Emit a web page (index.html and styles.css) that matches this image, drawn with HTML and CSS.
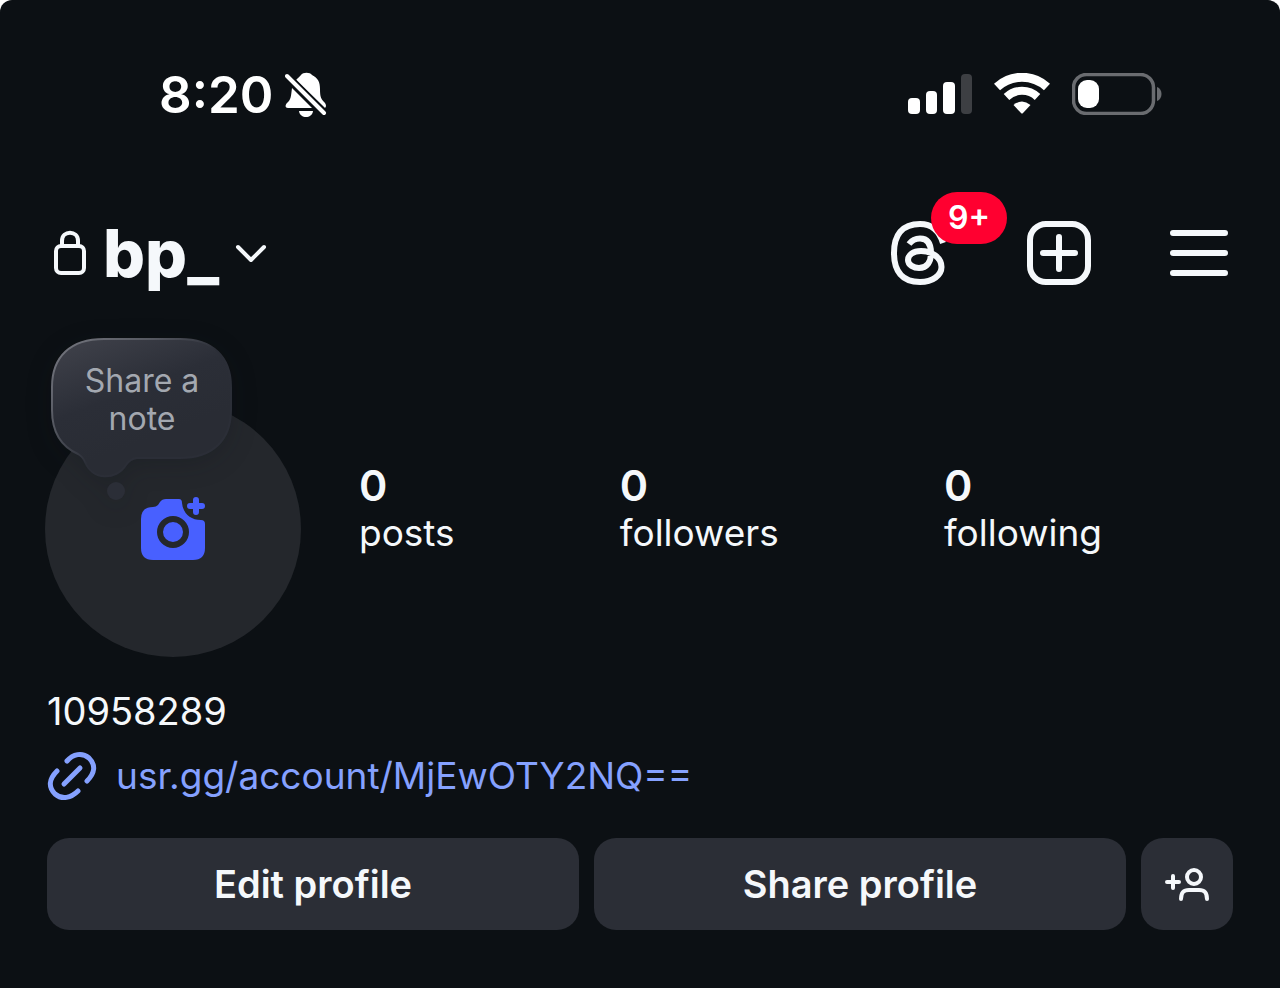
FILE: index.html
```
<!DOCTYPE html>
<html lang="en">
<head>
    <meta charset="UTF-8">
    <meta name="viewport" content="width=device-width, initial-scale=1.0">
    <title>Profile</title>
    <link rel="stylesheet" href="styles.css">
</head>
<body>
    <div class="screen">
        <div class="status-bar">
            <div class="status-left">
                <span class="time">8:20</span>
                <svg class="bell" width="42" height="46" viewBox="0 0 42 46" fill="#fff">
                    <path d="M7 16 L27 36 H3 C0 36 0 33 2 31 C6 28 6 24 7 16 Z"/>
                    <path d="M11 8 C13 6 15 4 16 3 C18 0 25 0 27 3 C33 6 35 10 35 17 C35 25 36 27 40 31 Q42 34 40 36 Z"/>
                    <path d="M14 39 H28 C27 47 15 47 14 39 Z"/>
                    <path d="M2 4 L39 41" stroke="#0c1014" stroke-width="8"/>
                    <path d="M2 4 L39 41" stroke="#fff" stroke-width="4" stroke-linecap="round"/>
                </svg>
            </div>
            <div class="status-right">
                <svg width="64" height="42" viewBox="0 0 64 42" fill="#fff">
                    <rect x="0" y="25" width="12" height="16" rx="4"/>
                    <rect x="18" y="18" width="11" height="23" rx="4"/>
                    <rect x="35" y="9" width="12" height="32" rx="4"/>
                    <rect x="53" y="1" width="11" height="40" rx="4" fill="#3d3f43"/>
                </svg>
                <svg width="56" height="42" viewBox="0 0 56 42" fill="none" stroke="#fff">
                    <path d="M3 14 A37 37 0 0 1 53 14" stroke-width="9"/>
                    <path d="M12.500 24 A22.500 22.500 0 0 1 43.500 24" stroke-width="8"/>
                    <path d="M19.500 32 Q28 25 36.500 32 L29 40 Q28 41 27 40 Z" fill="#fff" stroke="none"/>
                </svg>
                <svg width="90" height="42" viewBox="0 0 90 42">
                    <rect x="1.500" y="1.500" width="80" height="39" rx="13" fill="none" stroke="#6a6c70" stroke-width="3.500"/>
                    <rect x="6" y="7" width="21" height="28" rx="9" fill="#fff"/>
                    <path d="M85 14 C91 16 91 26 85 28 Z" fill="#6a6c70"/>
                </svg>
            </div>
        </div>

        <header class="header">
            <button class="account" type="button">
                <svg width="34" height="46" viewBox="0 0 34 46" fill="none" stroke="#f5f8fb" stroke-width="4">
                    <rect x="3" y="16" width="28" height="27" rx="5"/>
                    <path d="M9 16 V11 C9 0 25 0 25 11 V16"/>
                </svg>
                <span class="username">bp_</span>
                <svg width="32" height="20" viewBox="0 0 32 20" fill="none" stroke="#f5f8fb" stroke-width="4" stroke-linecap="round" stroke-linejoin="round">
                    <path d="M3 4 L16 17 L29 4"/>
                </svg>
            </button>
            <nav class="actions">
                <button class="threads" type="button" aria-label="Threads">
                    <svg width="64" height="64" viewBox="0 0 64 64" fill="none" stroke="#f5f8fb" stroke-width="6">
                        <path d="M55 22 C51 9 43 3 32 3 C14 3 6 14 6 32 C6 50 14 61 32 61 C45 61 53.500 54 53.500 46 C53.500 36 43 30 33 30 C25 30 20 34 20 39 C20 44 26 47 31 47 C39 47 43 41 43 32 C43 22 39 17.500 32 17.500 C27 17.500 24 19 21 23"/>
                    </svg>
                    <span class="badge">9+</span>
                </button>
                <button type="button" aria-label="New post">
                    <svg width="64" height="64" viewBox="0 0 64 64" fill="none" stroke="#f5f8fb" stroke-width="6" stroke-linecap="round">
                        <rect x="3" y="3" width="58" height="58" rx="16"/>
                        <path d="M32 16 V48 M16 32 H48"/>
                    </svg>
                </button>
                <button class="menu" type="button" aria-label="Menu">
                    <svg width="64" height="64" viewBox="0 0 64 64" stroke="#f5f8fb" stroke-width="6" stroke-linecap="round">
                        <path d="M7 12 H59 M7 32 H59 M7 52 H59"/>
                    </svg>
                </button>
            </nav>
        </header>

        <section class="profile">
            <div class="avatar-box">
                <button class="avatar" type="button" aria-label="Add photo">
                    <svg width="64" height="64" viewBox="0 0 64 64">
                        <path d="M12 10 Q15 10 17 8 L19 5 Q21 2 25 2 H38 Q41 2 41 6 C42 16 49 23 60 23 Q64 23 64 27 V51 Q64 63 52 63 H12 Q0 63 0 51 V22 Q0 10 12 10 Z" fill="#4860ff"/>
                        <circle cx="32" cy="35" r="13" fill="#4860ff" stroke="#24272c" stroke-width="6"/>
                        <path d="M55 3 V15 M49 9 H61" stroke="#4860ff" stroke-width="6" stroke-linecap="round"/>
                    </svg>
                </button>
                <button class="note" type="button">
                    <svg class="bubble" width="184" height="166" viewBox="0 0 184 166">
                        <defs>
                            <linearGradient id="fill" x1="0" y1="0" x2="0.400" y2="0.800">
                                <stop offset="0" stop-color="#41434c"/>
                                <stop offset="0.600" stop-color="#2b2e37"/>
                                <stop offset="1" stop-color="#292c34"/>
                            </linearGradient>
                            <linearGradient id="edge" x1="0" y1="0" x2="0.800" y2="0.700">
                                <stop offset="0" stop-color="#777981"/>
                                <stop offset="0.400" stop-color="#555861"/>
                                <stop offset="0.700" stop-color="#2b2e37"/>
                            </linearGradient>
                        </defs>
                        <path d="M54 2 H130 C163 2 181 20 181 50 V73 C181 103 163 121 130 121 H87 Q80 122 76 128 C66 144 42 143 35 125 Q33 120 28 117 C10 109 2 94 2 73 V50 C2 20 20 2 54 2 Z" fill="url(#fill)" stroke="url(#edge)" stroke-width="2"/>
                        <circle cx="66" cy="154" r="9" fill="#2b2e37"/>
                    </svg>
                    <span class="note-text">Share a note</span>
                </button>
            </div>
            <ul class="stats">
                <li><strong>0</strong><span>posts</span></li>
                <li><strong>0</strong><span>followers</span></li>
                <li><strong>0</strong><span>following</span></li>
            </ul>
        </section>

        <p class="name">10958289</p>
        <a class="link" href="#">
            <svg width="50" height="50" viewBox="0 0 50 50" fill="none" stroke="#85a1ff" stroke-width="5" stroke-linecap="round">
                <path d="M20 10 C26 3 35 1 42 7 C49 14 48 22 40 30"/>
                <path d="M10 20 C2 28 1 36 8 43 C15 49 24 47 31 40"/>
                <path d="M17 33 L33 17"/>
            </svg>
            <span>usr.gg/account/MjEwOTY2NQ==</span>
        </a>

        <div class="buttons">
            <button class="btn" type="button">Edit profile</button>
            <button class="btn" type="button">Share profile</button>
            <button class="btn btn-icon" type="button" aria-label="Discover people">
                <svg width="44" height="36" viewBox="0 0 44 36" fill="none" stroke="#f5f8fb" stroke-width="4" stroke-linecap="round">
                    <circle cx="29" cy="11" r="7"/>
                    <path d="M16 33 C16 26 19 24 24 24 H34 C39 24 42 26 42 33"/>
                    <path d="M8 10 V22 M2 16 H14"/>
                </svg>
            </button>
        </div>
    </div>
</body>
</html>
```
FILE: styles.css
```
* {
    box-sizing: border-box;
}

body {
    margin: 0;
    background-color: #fff;
    color: #f5f8fb;
    font-family: Inter, "Liberation Sans", sans-serif;
    font-size: 38px;
    line-height: 48px;
}

button {
    padding: 0;
    border: none;
    background: none;
    color: inherit;
    font: inherit;
    cursor: pointer;
}

svg {
    display: block;
    flex-shrink: 0;
}

.screen {
    min-height: 100vh;
    padding: 64px 47px 57px;
    border-radius: 12px 12px 0 0;
    background-color: #0c1014;
}

/* status bar */
.status-bar,
.status-left,
.status-right {
    display: flex;
    align-items: center;
}

.status-bar {
    justify-content: space-between;
    height: 60px;
    padding: 0 71px 0 112px;
    color: #fff;
}

.status-left {
    gap: 12px;
    padding-top: 2px;
}

.status-right {
    gap: 22px;
}

.time {
    font-size: 51px;
    font-weight: 600;
    line-height: 60px;
}

/* header */
.header {
    display: flex;
    justify-content: space-between;
    align-items: center;
    height: 80px;
    margin-top: 89px;
}

.account {
    display: flex;
    align-items: center;
    gap: 16px;
    padding-left: 6px;
}

.username {
    font-size: 66px;
    font-weight: 800;
    line-height: 80px;
}

.actions {
    display: flex;
    align-items: center;
    gap: 75px;
    padding-right: 3px;
}

.threads {
    position: relative;
}

.badge {
    position: absolute;
    top: -29px;
    left: 43px;
    width: 76px;
    border-radius: 26px;
    background-color: #ff0030;
    color: #fff;
    font-size: 32px;
    font-weight: 600;
    line-height: 52px;
    text-align: center;
}

/* avatar, note and counters */
.profile {
    display: flex;
    align-items: center;
    gap: 58px;
    margin-top: 44px;
}

.avatar-box {
    position: relative;
    flex-shrink: 0;
    margin-left: -2px;
    padding-top: 64px;
}

.avatar {
    display: flex;
    justify-content: center;
    align-items: center;
    width: 256px;
    height: 256px;
    border-radius: 50%;
    background-color: #24272c;
}

.note {
    position: absolute;
    top: 0;
    left: 5px;
    width: 184px;
    height: 122px;
    padding: 4px 32px 0;
    color: #a3a8b0;
    font-size: 32px;
    line-height: 38px;
}

.bubble {
    position: absolute;
    top: 0;
    left: 0;
    filter: drop-shadow(0 6px 12px rgba(12, 16, 20, 0.2));
}

.note-text {
    position: relative;
}

.stats {
    display: flex;
    flex: 1;
    justify-content: space-between;
    margin: 0;
    padding: 24px 131px 0 0;
    font-size: 37px;
    list-style: none;
}

.stats li {
    display: flex;
    flex-direction: column;
}

.stats strong {
    font-size: 43px;
    font-weight: 600;
}

/* bio */
.name {
    margin: 30px 0 16px;
}

.link {
    display: flex;
    align-items: center;
    gap: 19px;
    color: #85a1ff;
    font-size: 37px;
    text-decoration: none;
}

/* bottom buttons */
.buttons {
    display: flex;
    gap: 15px;
    margin-top: 37px;
}

.btn {
    flex: 1;
    height: 92px;
    border-radius: 22px;
    background-color: #2b2e36;
    font-weight: 600;
}

.btn-icon {
    display: flex;
    flex: 0 0 92px;
    justify-content: center;
    align-items: center;
}
```
